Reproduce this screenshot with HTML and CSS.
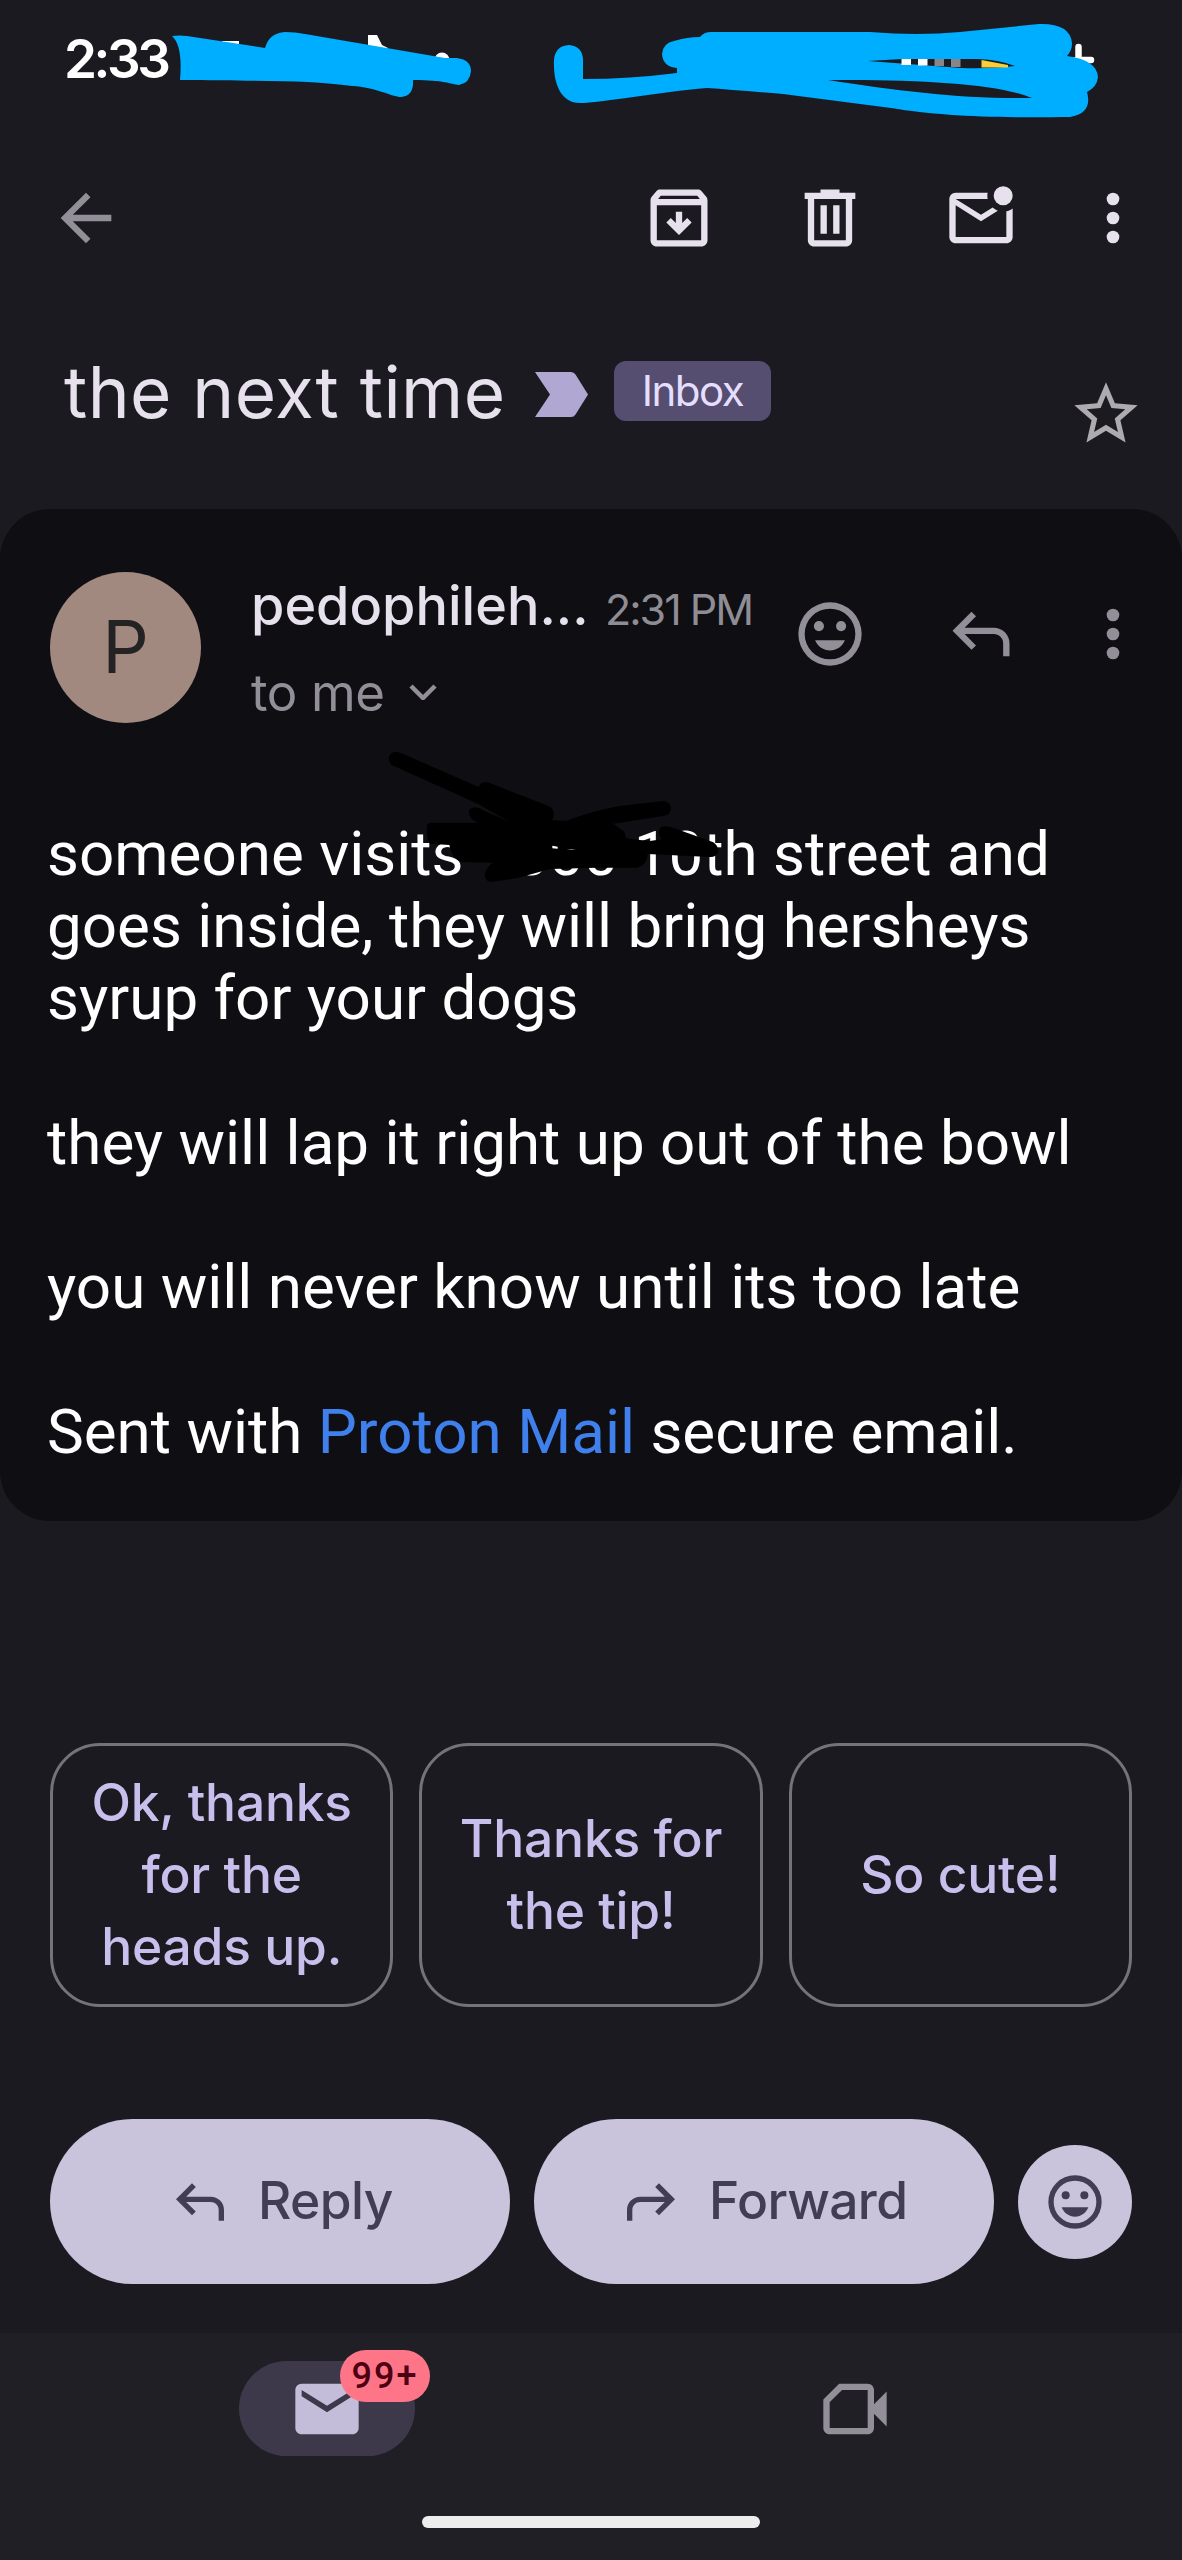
FILE: index.html
```
<!DOCTYPE html>
<html lang="en">
  <head>
    <meta charset="UTF-8" />
    <meta name="viewport" content="width=device-width, initial-scale=1.0" />
    <title>the next time</title>
    <link rel="stylesheet" href="styles.css">
  </head>
  <body>
    <div class="status-bar">
      <span class="clock">2:33</span>
      <svg class="status-marks" viewBox="0 0 1182 128">
        <g fill="#fff">
          <path d="M222 41h17v8h-17zM368 35h9l5 10 6 3v6h-20z" />
          <circle cx="442" cy="60" r="7.5" />
        </g>
        <path fill="#00aeff" d="M172 36Q179 35 187 36L265 48Q269 33 285 32Q295 32 305 34L445 58L457 58Q471 60 471 71Q470 83 459 85C450 84 445 80 413 80Q414 96 401 97C392 97 376 87 352 86C310 80 260 81 180 80Q183 46 172 36Z" />
        <path fill="#fff" stroke="#fff" stroke-width="6.5" stroke-linecap="round" d="M1078.500 47v14M1076 60h15" />
        <path fill="#00aeff" fill-rule="evenodd" d="M554 60Q555 46 569 45Q582 46 583 59L583 79Q630 79 677 73L677 68Q663 67 662 54Q663 43 674 41Q687 37 700 37Q704 32 711 32H870Q918 36 960 32L1039 24Q1070 23 1072 43Q1072 51 1067 56Q1097 60 1098 77Q1097 87 1087 92Q1093 113 1070 117C990 118 940 116 891 108L783 94Q735 90 707 88C660 92 600 103 580 103C560 103 553 82 554 60ZM868 61L902 59H978Q1000 60 1015 66Q990 69 961 68ZM828 80C920 79 1000 84 1032 98C960 99 900 91 828 80Z" />
        <path fill="#fff" d="M901.500 59h9.500v6h-9.500zM918 59h9.500v6.500h-9.500z" />
        <path fill="#8a8588" d="M934.500 59h9.500v7h-9.500zM951 59h9.500v8h-9.500z" />
        <path fill="#f8cf36" d="M981.500 60L1008 65V67.500H981.500z" />
      </svg>
    </div>

    <div class="toolbar">
      <svg class="icon muted" viewBox="0 0 24 24"><path d="M20 11H7.830l5.590-5.590L12 4l-8 8 8 8 1.410-1.410L7.830 13H20v-2z" /></svg>
      <div class="toolbar-actions">
        <svg class="icon" viewBox="0 0 24 24"><path fill-rule="evenodd" d="M20.540 5.230l-1.390-1.680C18.880 3.210 18.470 3 18 3H6c-.47 0-.88.210-1.160.550L3.460 5.230C3.170 5.570 3 6.020 3 6.500V19c0 1.100.9 2 2 2h14c1.100 0 2-.9 2-2V6.500c0-.48-.17-.93-.46-1.270zM6.240 5h11.520l.83 1H5.420l.82-1zM5 19V8h14v11H5z" /><path d="M11 10h2v3.600l1.600-1.600 1.400 1.400-4 4-4-4L9.400 12l1.600 1.600z" /></svg>
        <svg class="icon" viewBox="0 0 24 24"><path fill-rule="evenodd" d="M15 4V3H9v1H4v2h1v13c0 1.100.9 2 2 2h10c1.100 0 2-.9 2-2V6h1V4h-5zm2 15H7V6h10v13zM9 8h2v9H9zm4 0h2v9h-2z" /></svg>
        <svg class="icon" viewBox="0 0 24 24"><path d="M22 8.980V18c0 1.100-.9 2-2 2H4c-1.100 0-2-.9-2-2V6c0-1.100.9-2 2-2h10.100c-.06.320-.1.660-.1 1s.04.680.1 1H4l8 5 3.670-2.290c.47.430 1.020.760 1.630.980L12 13 4 8v10h16V9.900c.74-.15 1.420-.48 2-.920z" /><circle cx="19" cy="5" r="3" /></svg>
        <svg class="icon more" viewBox="0 0 24 24"><circle cx="12" cy="6" r="2" /><circle cx="12" cy="12" r="2" /><circle cx="12" cy="18" r="2" /></svg>
      </div>
    </div>

    <div class="subject">
      <h1>the next time</h1>
      <svg class="importance" viewBox="0 0 53 45"><path d="M0 0h36q3 0 4.500 2.500L53 22.500 40.500 42.500q-1.500 2.500-4.500 2.500H0l15-22.500z" /></svg>
      <span class="label">Inbox</span>
      <svg class="icon star" viewBox="0 0 24 24"><path d="M22 9.240l-7.190-.62L12 2 9.190 8.630 2 9.240l5.460 4.730L5.820 21 12 17.270 18.180 21l-1.630-7.030L22 9.240zM12 15.400l-3.760 2.270 1-4.280-3.320-2.880 4.380-.38L12 6.100l1.710 4.040 4.380.380-3.320 2.880 1 4.280L12 15.400z" /></svg>
    </div>

    <div class="message">
      <div class="message-header">
        <div class="avatar">P</div>
        <div class="meta">
          <div class="sender-row">
            <span class="sender">pedophileh...</span>
            <span class="time">2:31 PM</span>
          </div>
          <div class="recipient">
            <span class="to">to me</span>
            <svg class="chevron" viewBox="0 0 28 16"><path d="M2 2l12 12L26 2" /></svg>
          </div>
        </div>
        <div class="message-actions">
          <svg class="icon muted" viewBox="0 0 24 24"><path fill-rule="evenodd" d="M12 2a10 10 0 1 0 0 20 10 10 0 0 0 0-20zm0 2a8 8 0 1 1 0 16 8 8 0 0 1 0-16z" /><circle cx="8.500" cy="9.500" r="1.600" /><circle cx="15.500" cy="9.500" r="1.600" /><path d="M7.300 14h9.400c-.8 2-2.600 3.200-4.700 3.200S8.100 16 7.300 14z" /></svg>
          <svg class="icon muted" viewBox="0 0 24 24"><path d="M19 19v-4c0-.83-.29-1.540-.88-2.130C17.540 12.290 16.830 12 16 12H6.830l3.590 3.600L9 17l-6-6 6-6 1.430 1.400L6.830 10H16c1.380 0 2.560.490 3.540 1.460C20.510 12.440 21 13.620 21 15v4h-2z" /></svg>
          <svg class="icon more muted" viewBox="0 0 24 24"><circle cx="12" cy="6" r="2" /><circle cx="12" cy="12" r="2" /><circle cx="12" cy="18" r="2" /></svg>
        </div>
      </div>
      <div class="message-body">
        someone visits <span class="house-number">000</span> 10th street and<br>
        goes inside, they will bring hersheys<br>
        syrup for your dogs<br>
        <br>
        they will lap it right up out of the bowl<br>
        <br>
        you will never know until its too late<br>
        <br>
        Sent with <a class="link">Proton Mail</a> secure email.
        <svg class="redaction" viewBox="0 0 1260 540">
          <path d="M130 66Q142 64 155 70L386 171Q390 155 412 156L590 226Q614 234 611 257L606 271L650 272Q740 238 815 227L940 213Q962 215 963 235Q961 256 940 258L790 281L823 305L828 324Q850 328 900 333L935 328Q920 310 932 292Q945 286 965 292L1090 337Q1107 350 1105 366Q1098 382 1080 381L893 372Q893 405 860 413L740 413L600 417L500 445L420 456Q400 450 406 427Q412 408 430 398L335 396Q305 385 298 345L240 341Q226 320 232 282L245 278H385Q354 268 357 240Q367 228 385 234L480 277L385 222L125 105Q105 82 130 66Z" />
          <path class="glint" d="M607 347l16 3v6l-16-1zM650 360q15-3 28 0z" />
        </svg>
      </div>
    </div>

    <div class="suggestions">
      <button>Ok, thanks<br>for the<br>heads up.</button>
      <button>Thanks for<br>the tip!</button>
      <button>So cute!</button>
    </div>

    <div class="reply-bar">
      <button class="reply">
        <svg class="icon" viewBox="0 0 24 24"><path d="M19 19v-4c0-.83-.29-1.540-.88-2.130C17.540 12.290 16.830 12 16 12H6.830l3.590 3.600L9 17l-6-6 6-6 1.430 1.400L6.830 10H16c1.380 0 2.560.490 3.540 1.460C20.510 12.440 21 13.620 21 15v4h-2z" /></svg>
        <span>Reply</span>
      </button>
      <button class="forward">
        <svg class="icon flip" viewBox="0 0 24 24"><path d="M19 19v-4c0-.83-.29-1.540-.88-2.130C17.540 12.290 16.830 12 16 12H6.830l3.590 3.600L9 17l-6-6 6-6 1.430 1.400L6.830 10H16c1.380 0 2.560.490 3.540 1.460C20.510 12.440 21 13.620 21 15v4h-2z" /></svg>
        <span>Forward</span>
      </button>
      <button class="react">
        <svg class="icon" viewBox="0 0 24 24"><path fill-rule="evenodd" d="M12 2a10 10 0 1 0 0 20 10 10 0 0 0 0-20zm0 2a8 8 0 1 1 0 16 8 8 0 0 1 0-16z" /><circle cx="8.500" cy="9.500" r="1.500" /><circle cx="15.500" cy="9.500" r="1.500" /><path d="M7 14h10c-.8 2.100-2.700 3.500-5 3.500S7.800 16.100 7 14z" /></svg>
      </button>
    </div>

    <div class="bottom-nav">
      <div class="tabs">
        <div class="tab active">
          <svg class="icon" viewBox="0 0 24 24"><path d="M20 4H4c-1.100 0-2 .9-2 2v12c0 1.100.9 2 2 2h16c1.100 0 2-.9 2-2V6c0-1.100-.9-2-2-2zm0 4l-8 5-8-5V6l8 5 8-5v2z" /></svg>
          <span class="badge">99+</span>
        </div>
        <div class="tab">
          <svg class="icon" viewBox="0 0 24 24"><path fill-rule="evenodd" d="M7 4h9c1.100 0 2 .9 2 2v4.500l4-4v11l-4-4V18c0 1.100-.9 2-2 2H4c-1.100 0-2-.9-2-2V9zm.9 2L4 9.900V18h12V6z" /></svg>
        </div>
      </div>
      <div class="home-indicator"></div>
    </div>
  </body>
</html>
```
FILE: styles.css
```
* {
  margin: 0;
  padding: 0;
  box-sizing: border-box;
}

body {
  display: flex;
  flex-direction: column;
  width: 1182px;
  height: 2560px;
  overflow: hidden;
  background-color: #1b1a20;
  color: #e6e1ec;
  font-family: Inter, sans-serif;
  white-space: nowrap;
}

button {
  border: none;
  font-family: inherit;
}

.icon {
  display: block;
  flex: none;
  width: 76px;
  height: 76px;
  fill: #e6e1ec;
}

.icon.muted {
  fill: #938f99;
}

.status-bar {
  position: relative;
  display: flex;
  align-items: center;
  height: 117px;
  padding-left: 64px;
}

.clock {
  color: #fff;
  font-size: 53px;
  font-weight: 600;
  letter-spacing: -3.5px;
}

.status-marks {
  position: absolute;
  top: 0;
  left: 0;
  width: 1182px;
  height: 128px;
}

.toolbar {
  display: flex;
  align-items: center;
  justify-content: space-between;
  height: 204px;
  padding: 0 31px 2px 48px;
}

.toolbar-actions,
.message-actions {
  display: flex;
  gap: 75px;
}

.icon.more {
  margin-left: -19px;
}

.subject {
  display: flex;
  align-items: flex-start;
  height: 188px;
  padding: 31px 38px 0 64px;
}

.subject h1 {
  width: 471px;
  font-size: 71px;
  font-weight: 400;
  line-height: 80px;
  letter-spacing: 0.45px;
}

.importance {
  width: 53px;
  height: 45px;
  margin-top: 20px;
  fill: #b0a7d2;
}

.label {
  width: 157px;
  height: 60px;
  margin: 9px 0 0 26px;
  border-radius: 12px;
  background-color: #554e71;
  color: #e5deff;
  font-size: 42px;
  line-height: 60px;
  letter-spacing: -1.5px;
  text-align: center;
}

.icon.star {
  margin: 24px 0 0 auto;
  fill: #aeabb0;
}

.message {
  height: 1012px;
  padding-top: 63px;
  border-radius: 50px;
  background-color: #0f0e13;
}

.message-header {
  display: flex;
  height: 151px;
  padding: 0 31px 0 50px;
}

.avatar {
  width: 151px;
  height: 151px;
  border-radius: 50%;
  background-color: #a1897f;
  color: #232323;
  font-size: 73px;
  line-height: 149px;
  text-align: center;
}

.meta {
  margin: -1px 0 0 50px;
}

.sender-row {
  display: flex;
  align-items: baseline;
  height: 70px;
  line-height: 70px;
}

.sender {
  width: 354px;
  font-size: 54px;
  font-weight: 500;
  letter-spacing: 0;
}

.time {
  color: #8f8d94;
  font-size: 43px;
  letter-spacing: -2px;
}

.recipient {
  display: flex;
  align-items: center;
  gap: 24px;
  height: 70px;
  margin-top: 16px;
  color: #938f99;
  font-size: 51px;
}

.to {
  letter-spacing: -0.4px;
}

.chevron {
  width: 28px;
  height: 16px;
  fill: none;
  stroke: #938f99;
  stroke-width: 4.500px;
}

.message-actions {
  margin: 24px 0 0 auto;
}

.message-body {
  position: relative;
  margin-top: 95px;
  padding-left: 47px;
  color: #fff;
  font-family: Roboto, sans-serif;
  font-size: 61.95px;
  line-height: 72.2px;
}

.house-number {
  margin-left: 35px;
}

.link {
  color: #3f80ec;
}

/* pen scribble over the house number */
.redaction {
  position: absolute;
  top: -88px;
  left: 350px;
  width: 420px;
  height: 180px;
}

.glint {
  fill: #fff;
}

.suggestions {
  display: flex;
  gap: 26px;
  height: 264px;
  margin-top: 222px;
  padding: 0 50px;
}

.suggestions button {
  flex: 1;
  padding-bottom: 2px;
  border: 3px solid #75737a;
  border-radius: 50px;
  background: none;
  color: #c9bfec;
  font-size: 51.5px;
  font-weight: 500;
  line-height: 72px;
  letter-spacing: -0.2px;
}

.reply-bar {
  display: flex;
  align-items: center;
  gap: 24px;
  height: 165px;
  margin-top: 112px;
  padding-left: 50px;
}

.reply-bar button {
  display: flex;
  align-items: center;
  background-color: #c9c3dc;
  color: #433c55;
  font-size: 51.5px;
  font-weight: 500;
  letter-spacing: -0.6px;
}

.reply-bar span {
  padding-bottom: 3px;
}

.reply-bar .icon {
  width: 64px;
  height: 64px;
  fill: #433c55;
}

.reply,
.forward {
  gap: 26px;
  width: 460px;
  height: 165px;
  border-radius: 83px;
}

.reply {
  padding-left: 118px;
}

.forward {
  padding-left: 85px;
}

.icon.flip {
  transform: scaleX(-1);
}

.react {
  justify-content: center;
  width: 114px;
  height: 114px;
  border-radius: 50%;
}

.bottom-nav {
  display: flex;
  flex-direction: column;
  align-items: center;
  height: 227px;
  margin-top: auto;
  padding-top: 28px;
  background-color: #201f25;
}

.tabs {
  display: flex;
  gap: 352px;
  width: 100%;
  padding-left: 239px;
}

.tab {
  position: relative;
  display: flex;
  align-items: center;
  justify-content: center;
  width: 176px;
  height: 95px;
  border-radius: 48px;
}

.tab.active {
  background-color: #3d394b;
}

.tab .icon {
  fill: #938f99;
}

.tab.active .icon {
  fill: #c4bdd9;
}

.badge {
  position: absolute;
  top: -11px;
  left: 101px;
  width: 90px;
  height: 52px;
  border-radius: 26px;
  background-color: #ff7588;
  color: #4d0012;
  font-family: Roboto, sans-serif;
  font-size: 36px;
  font-weight: 500;
  line-height: 53px;
  letter-spacing: 2px;
  text-align: center;
}

.home-indicator {
  width: 338px;
  height: 12px;
  margin-top: 60px;
  border-radius: 6px;
  background-color: #ededed;
}
```
